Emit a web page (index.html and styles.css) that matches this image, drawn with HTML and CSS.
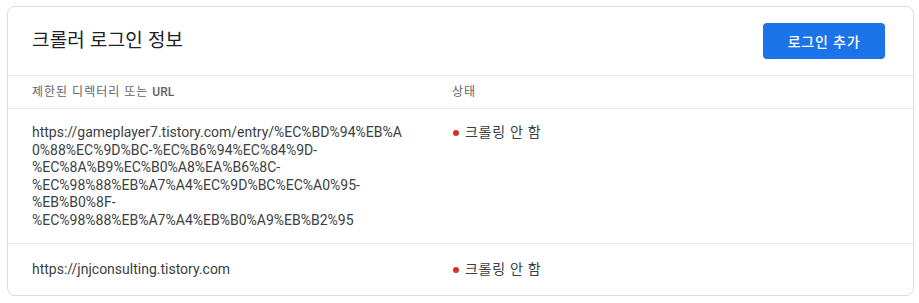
FILE: index.html
```html
<!DOCTYPE html>
<html lang="ko">
<head>
<meta charset="utf-8">
<link rel="stylesheet" href="styles.css">
</head>
<body>
<section class="card">
  <header class="card-head">
    <h2 class="title">크롤러 로그인 정보</h2>
    <button class="btn-primary" type="button">로그인 추가</button>
  </header>
  <div class="table">
    <div class="row row-head">
      <div class="cell">제한된 디렉터리 또는 <span class="latin">URL</span></div>
      <div class="cell">상태</div>
    </div>
    <div class="row">
      <div class="cell url">https://gameplayer7.tistory.com/entry/%EC%BD%94%EB%A0%88%EC%9D%BC-%EC%B6%94%EC%84%9D-%EC%8A%B9%EC%B0%A8%EA%B6%8C-%EC%98%88%EB%A7%A4%EC%9D%BC%EC%A0%95-%EB%B0%8F-%EC%98%88%EB%A7%A4%EB%B0%A9%EB%B2%95</div>
      <div class="cell status"><span class="dot"></span><span class="ko">크롤링 안 함</span></div>
    </div>
    <div class="row">
      <div class="cell url">https://jnjconsulting.tistory.com</div>
      <div class="cell status"><span class="dot"></span><span class="ko">크롤링 안 함</span></div>
    </div>
  </div>
</section>
</body>
</html>
```

FILE: styles.css
```css
html, body {
  background: #ffffff;
}
body {
  margin: 6px 5px 0 7px;
  font-family: Roboto, "Noto Sans CJK KR", sans-serif;
  color: #3c4043;
}
.card {
  border: 1px solid #dadce0;
  border-radius: 8px;
  background: #fff;
  box-sizing: border-box;
  height: 290px;
}
.card-head {
  display: flex;
  align-items: center;
  justify-content: space-between;
  padding: 16px 28px 16px 24px;
  border-bottom: 1px solid #e8eaed;
}
.title {
  margin: 0;
  font-size: 19px;
  font-weight: 400;
  letter-spacing: 0.2px;
  color: #202124;
  line-height: 36px;
}
.btn-primary {
  height: 36px;
  width: 122px;
  border: none;
  border-radius: 4px;
  background: #1a73e8;
  color: #fff;
  font-family: Roboto, "Noto Sans CJK KR", sans-serif;
  font-size: 14px;
  font-weight: 500;
  letter-spacing: 0.8px;
  padding: 0;
}
.row {
  display: grid;
  grid-template-columns: 420px 1fr;
  padding: 15px 24px 14px;
  border-bottom: 1px solid #e8eaed;
  font-size: 14px;
  line-height: 17.5px;
}
.row:last-child {
  border-bottom: none;
  padding: 17px 24px 14px;
}
.row-head {
  padding: 8px 24px 7px;
  font-size: 12px;
  letter-spacing: 1px;
  line-height: 17px;
  color: #5f6368;
}
.latin {
  font-weight: 500;
  letter-spacing: 0;
}
.url {
  padding-right: 44px;
  overflow-wrap: anywhere;
  color: #3c4043;
}
.status {
  display: flex;
  align-items: flex-start;
  gap: 6px;
  color: #3c4043;
}
.ko {
  letter-spacing: 0.7px;
}
.dot {
  flex: none;
  width: 6px;
  height: 6px;
  border-radius: 50%;
  background: #d93025;
  margin: 6px 0 0 1px;
}
```
